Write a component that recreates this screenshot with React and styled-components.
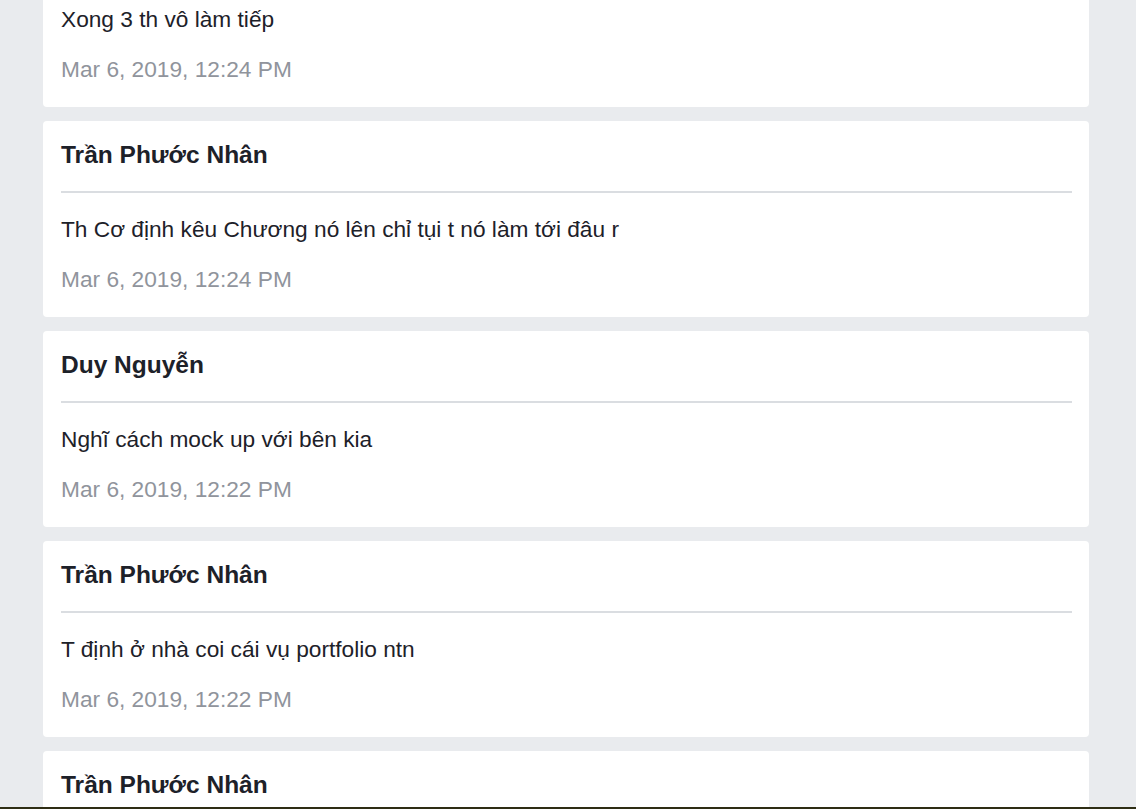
import React from 'react';
import styled, { createGlobalStyle } from 'styled-components';

const GlobalStyle = createGlobalStyle`
  html, body {
    margin: 0;
    padding: 0;
    background-color: #e9ebee;
    font-family: "Liberation Sans", Arial, Helvetica, sans-serif;
    overflow: hidden;
  }
  * {
    box-sizing: border-box;
  }
`;

const Page = styled.div`
  height: 809px;
  overflow: hidden;
`;

const Feed = styled.div`
  display: flex;
  flex-direction: column;
  gap: 14px;
  width: 1046px;
  margin-left: 43px;
  margin-top: -89px;
`;

const Card = styled.div`
  background-color: #fff;
  border-radius: 4px;
  padding: 20px 17px 24px 18px;
  height: 196px;
`;

const Author = styled.h3`
  margin: 0;
  font-size: 24.5px;
  line-height: 28px;
  font-weight: 700;
  color: #1d2129;
`;

const Divider = styled.hr`
  margin: 22px 0 0;
  border: none;
  height: 2px;
  background-color: #dadde1;
`;

const Message = styled.p`
  margin: 22px 0 0;
  font-size: 22.7px;
  line-height: 28px;
  color: #1d2129;
`;

const Time = styled.div`
  margin-top: 22px;
  font-size: 22.7px;
  line-height: 28px;
  color: #90949c;
`;

const BottomEdge = styled.div`
  position: fixed;
  left: 0;
  right: 0;
  bottom: 0;
  height: 2px;
  background-color: #2e2d14;
`;

const messages = [
  { author: 'Trần Phước Nhân', text: 'Xong 3 th vô làm tiếp', time: 'Mar 6, 2019, 12:24 PM' },
  { author: 'Trần Phước Nhân', text: 'Th Cơ định kêu Chương nó lên chỉ tụi t nó làm tới đâu r', time: 'Mar 6, 2019, 12:24 PM' },
  { author: 'Duy Nguyễn', text: 'Nghĩ cách mock up với bên kia', time: 'Mar 6, 2019, 12:22 PM' },
  { author: 'Trần Phước Nhân', text: 'T định ở nhà coi cái vụ portfolio ntn', time: 'Mar 6, 2019, 12:22 PM' },
  { author: 'Trần Phước Nhân', text: 'Ok', time: 'Mar 6, 2019, 12:21 PM' },
];

function App() {
  return (
    <>
      <GlobalStyle />
      <Page>
        <Feed>
          {messages.map((m, i) => (
            <Card key={i}>
              <Author>{m.author}</Author>
              <Divider />
              <Message>{m.text}</Message>
              <Time>{m.time}</Time>
            </Card>
          ))}
        </Feed>
      </Page>
      <BottomEdge />
    </>
  );
}

export default App;
